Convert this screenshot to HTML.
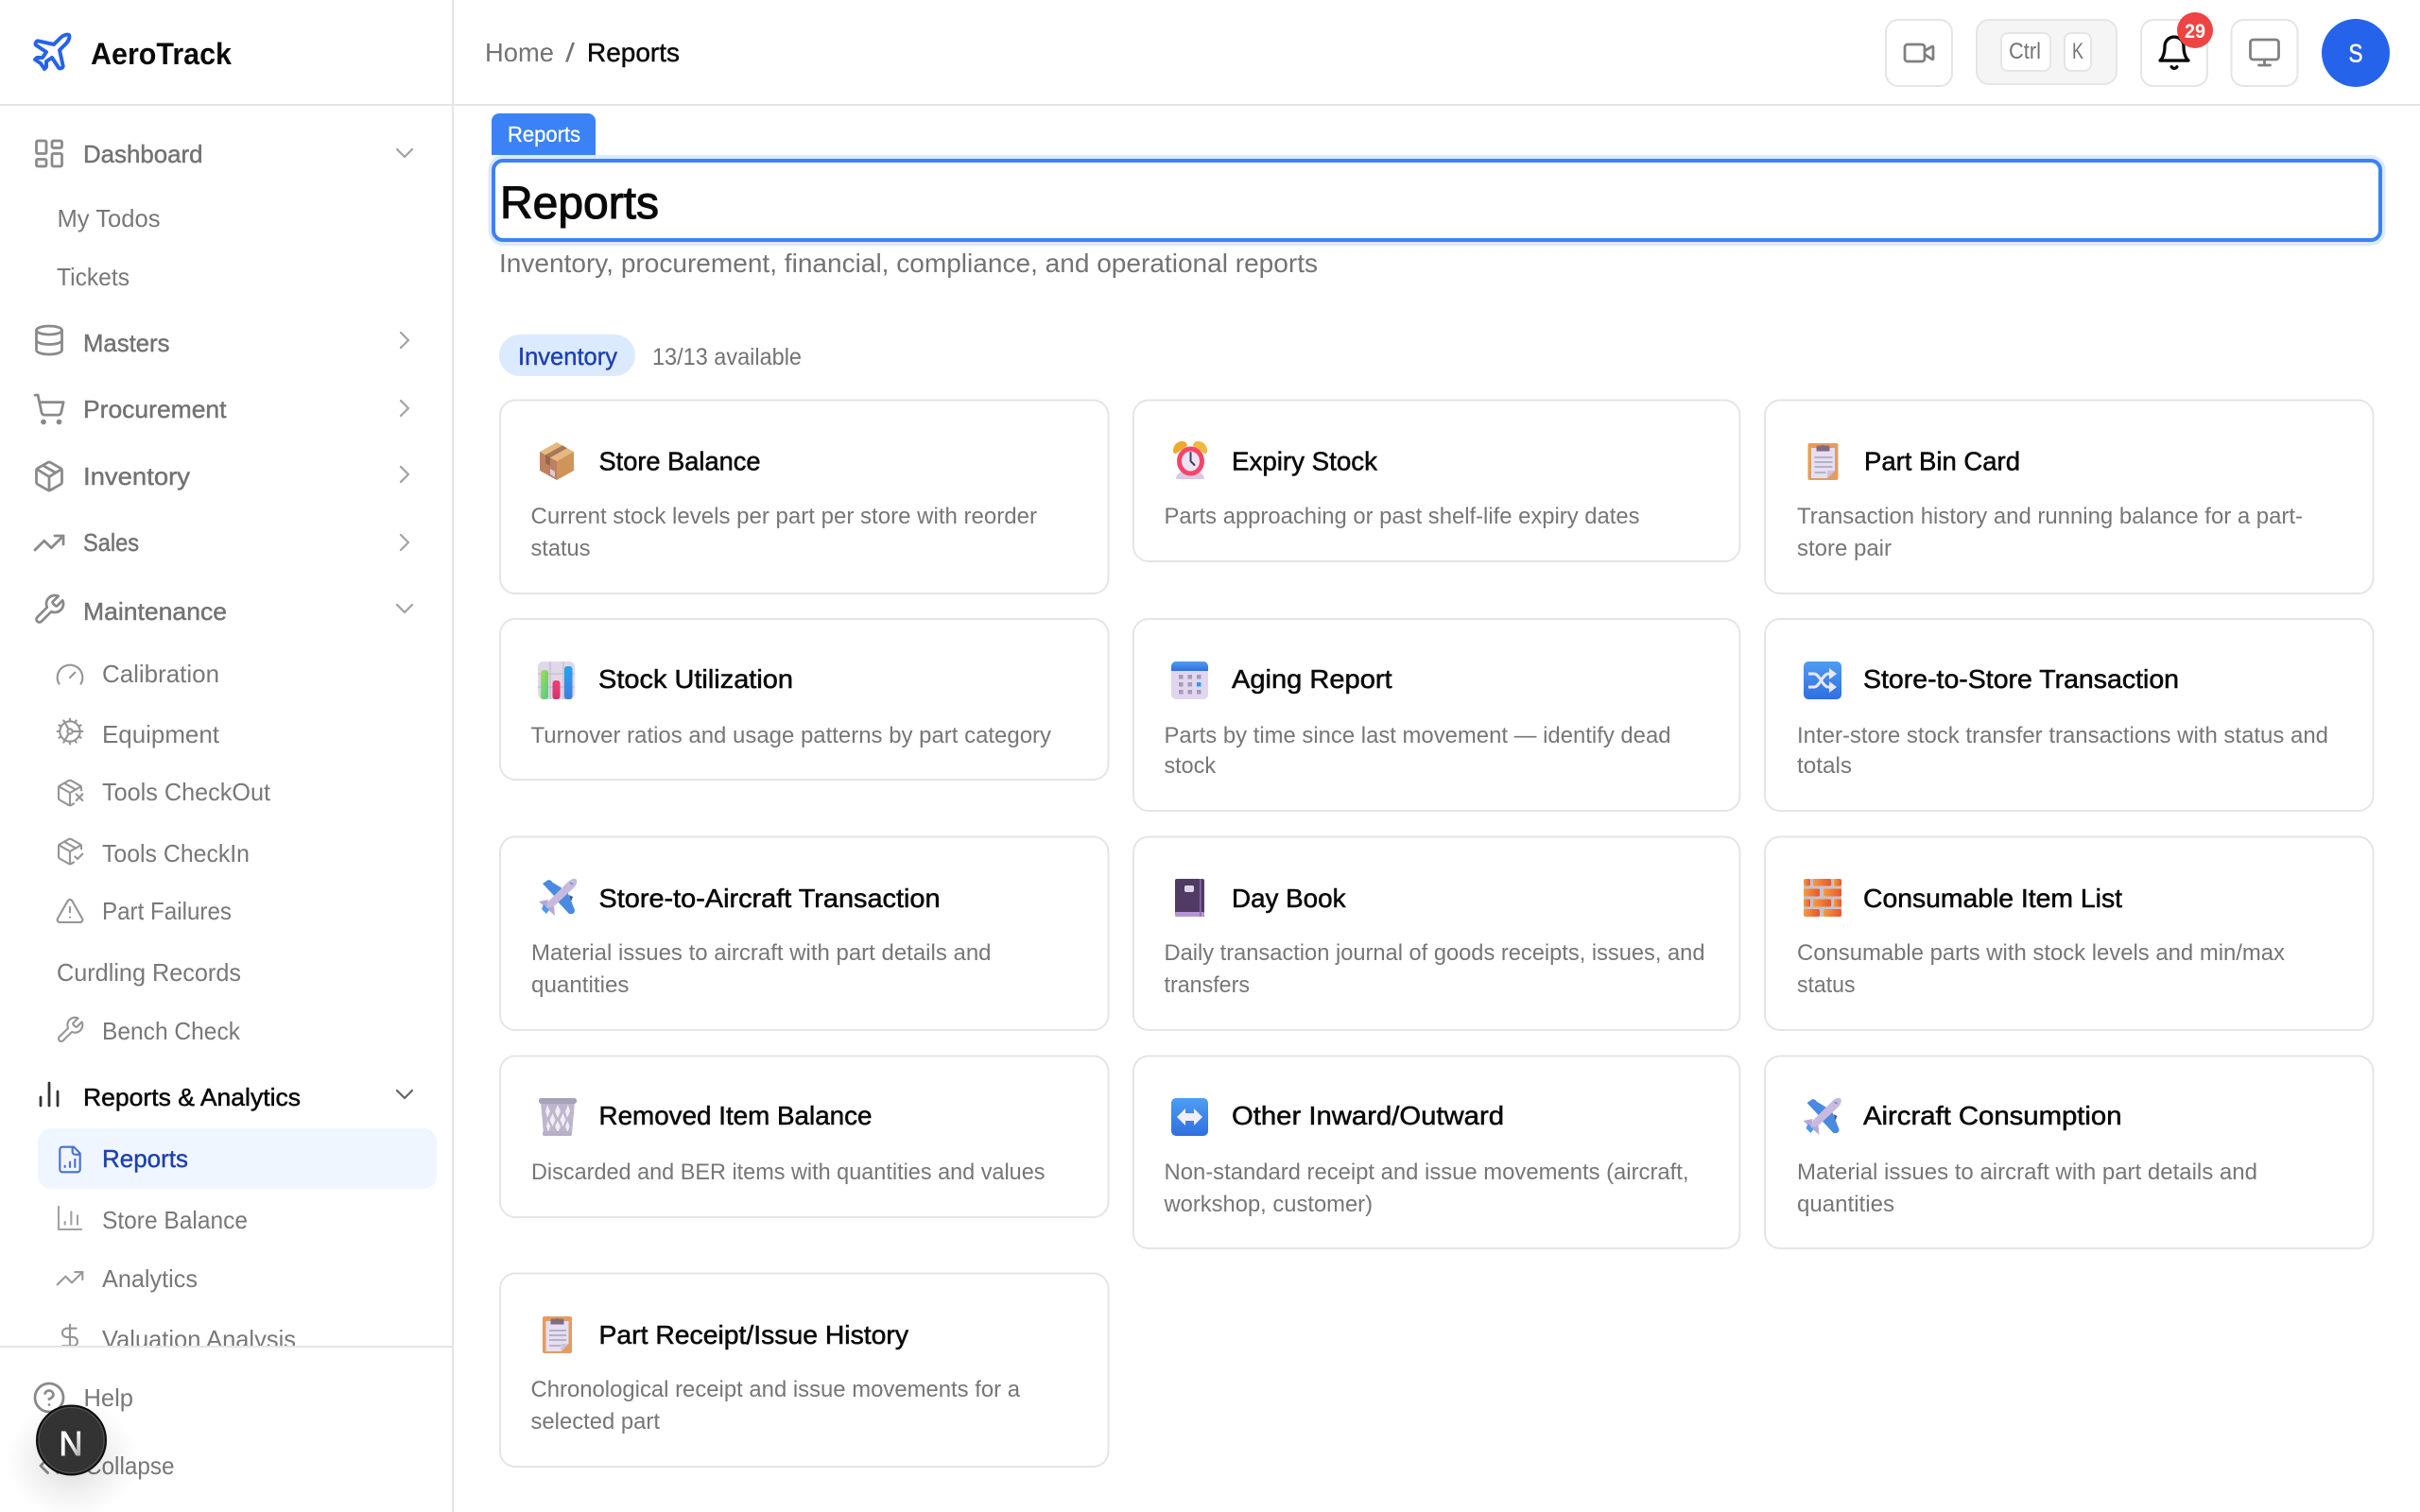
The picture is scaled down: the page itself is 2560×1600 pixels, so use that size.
<!DOCTYPE html>
<html lang="en">
<head>
<meta charset="utf-8">
<title>AeroTrack - Reports</title>
<style>
html,body{margin:0;padding:0;background:#fff;width:2560px;height:1600px;overflow:hidden}
svg{display:block}
text{font-family:"Liberation Sans",sans-serif;white-space:pre}
.nav{font-size:26px;fill:#737373;stroke:#737373;stroke-width:.45}
.sub{font-size:26px;fill:#787878}
.ttl{font-size:28px;fill:#0a0a0a;stroke:#0a0a0a;stroke-width:.55}
.dsc{font-size:24px;fill:#767676}
.ic{fill:none;stroke:#8a8a8a;stroke-linecap:round;stroke-linejoin:round;stroke-width:1.85}
.is{fill:none;stroke:#969696;stroke-linecap:round;stroke-linejoin:round;stroke-width:1.6}
.ch{fill:none;stroke:#a3a3a3;stroke-linecap:round;stroke-linejoin:round;stroke-width:1.7}
.card{fill:#fff;stroke:#e5e5e5;stroke-width:2}
</style>
</head>
<body>
<svg width="2560" height="1600" viewBox="0 0 2560 1600" xmlns="http://www.w3.org/2000/svg">
<defs>
<clipPath id="navclip"><rect x="0" y="112" width="478" height="1312"/></clipPath>
<linearGradient id="blue" x1="0" y1="0" x2="0" y2="1"><stop offset="0" stop-color="#4f9df2"/><stop offset="1" stop-color="#2f6fe0"/></linearGradient>
<linearGradient id="brick" x1="0" y1="0" x2="1" y2="0"><stop offset="0" stop-color="#f79a3e"/><stop offset="1" stop-color="#e9552c"/></linearGradient>
<linearGradient id="g1" x1="0" y1="0" x2="1" y2="1"><stop offset="0" stop-color="#a6e04c"/><stop offset="1" stop-color="#4cc98a"/></linearGradient>
<linearGradient id="g2" x1="0" y1="0" x2="0" y2="1"><stop offset="0" stop-color="#f0407a"/><stop offset="1" stop-color="#d8306c"/></linearGradient>
<linearGradient id="g3" x1="0" y1="0" x2="0" y2="1"><stop offset="0" stop-color="#29a0f0"/><stop offset="1" stop-color="#3f7fe0"/></linearGradient>
<linearGradient id="nfade" x1="0" y1="0" x2="1" y2="1"><stop offset=".45" stop-color="#fff"/><stop offset="1" stop-color="#8a8a8a"/></linearGradient>
<radialGradient id="shadow"><stop offset="0" stop-color="#000" stop-opacity=".14"/><stop offset=".6" stop-color="#000" stop-opacity=".05"/><stop offset="1" stop-color="#000" stop-opacity="0"/></radialGradient>
</defs>

<rect width="2560" height="1600" fill="#fff"/>

<!-- Sidebar frame -->
<rect x="478" y="0" width="2" height="1600" fill="#e5e5e5"/>
<rect x="0" y="110" width="2560" height="2" fill="#e5e5e5"/>

<!-- Logo -->
<g transform="translate(31,31) scale(2)" fill="none" stroke="#2563eb" stroke-width="2" stroke-linecap="round" stroke-linejoin="round"><path d="M17.8 19.2 16 11l3.5-3.5C21 6 21.5 4 21 3c-1-.5-3 0-4.5 1.5L13 8 4.8 6.2c-.5-.1-.9.1-1.1.5l-.3.5c-.2.5-.1 1 .3 1.3L9 12l-2 3H4l-1 1 3 2 2 3 1-1v-3l3-2 3.5 5.3c.3.4.8.5 1.3.3l.5-.2c.4-.3.6-.7.5-1.2z"/></g>
<text x="96" y="68" font-size="32" font-weight="700" fill="#0a0a0a" textLength="149" lengthAdjust="spacingAndGlyphs">AeroTrack</text>

<!-- Nav -->
<g clip-path="url(#navclip)">
<g transform="translate(34,144.5) scale(1.5)" class="ic"><rect width="7" height="9" x="3" y="3" rx="1"/><rect width="7" height="5" x="14" y="3" rx="1"/><rect width="7" height="9" x="14" y="12" rx="1"/><rect width="7" height="5" x="3" y="16" rx="1"/></g>
<text class="nav" x="88" y="172" textLength="126.500" lengthAdjust="spacingAndGlyphs">Dashboard</text>
<g transform="translate(412,146) scale(1.333)" class="ch"><path d="m6 9 6 6 6-6"/></g>

<text class="sub" x="60.500" y="240" textLength="109" lengthAdjust="spacingAndGlyphs">My Todos</text>
<text class="sub" x="60" y="302" textLength="77" lengthAdjust="spacingAndGlyphs">Tickets</text>

<g transform="translate(34,342) scale(1.5)" class="ic"><ellipse cx="12" cy="5" rx="9" ry="3"/><path d="M3 5V19A9 3 0 0 0 21 19V5"/><path d="M3 12A9 3 0 0 0 21 12"/></g>
<text class="nav" x="88" y="372" textLength="91.500" lengthAdjust="spacingAndGlyphs">Masters</text>
<g transform="translate(412,344) scale(1.333)" class="ch"><path d="m9 18 6-6-6-6"/></g>

<g transform="translate(34,415) scale(1.5)" class="ic"><circle cx="8" cy="21" r="1"/><circle cx="19" cy="21" r="1"/><path d="M2.05 2.05h2l2.66 12.42a2 2 0 0 0 2 1.58h9.78a2 2 0 0 0 1.95-1.57l1.65-7.43H5.12"/></g>
<text class="nav" x="88" y="442" textLength="151.500" lengthAdjust="spacingAndGlyphs">Procurement</text>
<g transform="translate(412,416) scale(1.333)" class="ch"><path d="m9 18 6-6-6-6"/></g>

<g transform="translate(34,486) scale(1.5)" class="ic"><path d="M11 21.73a2 2 0 0 0 2 0l7-4A2 2 0 0 0 21 16V8a2 2 0 0 0-1-1.73l-7-4a2 2 0 0 0-2 0l-7 4A2 2 0 0 0 3 8v8a2 2 0 0 0 1 1.73z"/><path d="M12 22V12"/><path d="m3.3 7 7.703 4.734a2 2 0 0 0 1.994 0L20.7 7"/><path d="m7.5 4.27 9 5.15"/></g>
<text class="nav" x="88" y="513" textLength="113" lengthAdjust="spacingAndGlyphs">Inventory</text>
<g transform="translate(412,486) scale(1.333)" class="ch"><path d="m9 18 6-6-6-6"/></g>

<g transform="translate(34,556.5) scale(1.5)" class="ic"><path d="M16 7h6v6"/><path d="m22 7-8.5 8.5-5-5L2 17"/></g>
<text class="nav" x="88" y="583" textLength="59" lengthAdjust="spacingAndGlyphs">Sales</text>
<g transform="translate(412,558) scale(1.333)" class="ch"><path d="m9 18 6-6-6-6"/></g>

<g transform="translate(34,627) scale(1.5)" class="ic"><path d="M14.7 6.3a1 1 0 0 0 0 1.4l1.6 1.6a1 1 0 0 0 1.4 0l3.77-3.77a6 6 0 0 1-7.94 7.94l-6.91 6.91a2.12 2.12 0 0 1-3-3l6.91-6.91a6 6 0 0 1 7.94-7.94l-3.76 3.76z"/></g>
<text class="nav" x="88" y="656" textLength="152" lengthAdjust="spacingAndGlyphs">Maintenance</text>
<g transform="translate(412,628) scale(1.333)" class="ch"><path d="m6 9 6 6 6-6"/></g>

<g transform="translate(58,698.3) scale(1.333)" class="is"><path d="m12 14 4-4"/><path d="M3.34 19a10 10 0 1 1 17.32 0"/></g>
<text class="sub" x="108" y="722" textLength="124" lengthAdjust="spacingAndGlyphs">Calibration</text>

<g transform="translate(58,758) scale(1.333)" class="is"><path d="M12 20a8 8 0 1 0 0-16 8 8 0 0 0 0 16Z"/><path d="M12 14a2 2 0 1 0 0-4 2 2 0 0 0 0 4Z"/><path d="M12 2v2"/><path d="M12 22v-2"/><path d="m17 20.66-1-1.73"/><path d="M11 10.27 7 3.34"/><path d="m20.66 17-1.73-1"/><path d="m3.34 7 1.73 1"/><path d="M14 12h8"/><path d="M2 12h2"/><path d="m20.66 7-1.73 1"/><path d="m3.34 17 1.73-1"/><path d="m17 3.34-1 1.73"/><path d="m11 13.73-4 6.93"/></g>
<text class="sub" x="108" y="786" textLength="124" lengthAdjust="spacingAndGlyphs">Equipment</text>

<g transform="translate(58,823) scale(1.333)" class="is"><path d="M21 10V8a2 2 0 0 0-1-1.73l-7-4a2 2 0 0 0-2 0l-7 4A2 2 0 0 0 3 8v8a2 2 0 0 0 1 1.73l7 4a2 2 0 0 0 2 0l2-1.14"/><path d="m7.5 4.27 9 5.15"/><polyline points="3.29 7 12 12 20.71 7"/><line x1="12" x2="12" y1="22" y2="12"/><path d="m17 13 5 5m-5 0 5-5"/></g>
<text class="sub" x="108" y="847" textLength="178" lengthAdjust="spacingAndGlyphs">Tools CheckOut</text>

<g transform="translate(58,885) scale(1.333)" class="is"><path d="m16 16 2 2 4-4"/><path d="M21 10V8a2 2 0 0 0-1-1.73l-7-4a2 2 0 0 0-2 0l-7 4A2 2 0 0 0 3 8v8a2 2 0 0 0 1 1.73l7 4a2 2 0 0 0 2 0l2-1.14"/><path d="m7.5 4.27 9 5.15"/><polyline points="3.29 7 12 12 20.71 7"/><line x1="12" x2="12" y1="22" y2="12"/></g>
<text class="sub" x="108" y="912" textLength="156" lengthAdjust="spacingAndGlyphs">Tools CheckIn</text>

<g transform="translate(58,948) scale(1.333)" class="is"><path d="m21.73 18-8-14a2 2 0 0 0-3.48 0l-8 14A2 2 0 0 0 4 21h16a2 2 0 0 0 1.73-3"/><path d="M12 9v4"/><path d="M12 17h.01"/></g>
<text class="sub" x="108" y="973" textLength="137" lengthAdjust="spacingAndGlyphs">Part Failures</text>

<text class="sub" x="60" y="1038" textLength="195" lengthAdjust="spacingAndGlyphs">Curdling Records</text>

<g transform="translate(58,1074) scale(1.333)" class="is"><path d="M14.7 6.3a1 1 0 0 0 0 1.4l1.6 1.6a1 1 0 0 0 1.4 0l3.77-3.77a6 6 0 0 1-7.94 7.94l-6.91 6.91a2.12 2.12 0 0 1-3-3l6.91-6.91a6 6 0 0 1 7.94-7.94l-3.76 3.76z"/></g>
<text class="sub" x="108" y="1100" textLength="146" lengthAdjust="spacingAndGlyphs">Bench Check</text>

<g transform="translate(34,1140) scale(1.5)" class="ic" style="stroke:#333"><line x1="18" x2="18" y1="20" y2="10"/><line x1="12" x2="12" y1="20" y2="4"/><line x1="6" x2="6" y1="20" y2="14"/></g>
<text x="88" y="1170" font-size="26" fill="#0a0a0a" stroke="#0a0a0a" stroke-width=".5" textLength="230" lengthAdjust="spacingAndGlyphs">Reports &amp; Analytics</text>
<g transform="translate(412,1142) scale(1.333)" class="ch" style="stroke:#666"><path d="m6 9 6 6 6-6"/></g>

<rect x="40" y="1194" width="422" height="64" rx="14" fill="#eff6ff"/>
<g transform="translate(58,1211) scale(1.333)" class="is" style="stroke:#4a70d2"><path d="M15 2H6a2 2 0 0 0-2 2v16a2 2 0 0 0 2 2h12a2 2 0 0 0 2-2V7Z"/><path d="M14 2v4a2 2 0 0 0 2 2h4"/><path d="M8 18v-1"/><path d="M12 18v-4"/><path d="M16 18v-6"/></g>
<text x="108" y="1235" font-size="26" fill="#1e40af" stroke="#1e40af" stroke-width=".4" textLength="91" lengthAdjust="spacingAndGlyphs">Reports</text>

<g transform="translate(58,1273) scale(1.333)" class="is" style="stroke:#a3a3a3"><path d="M3 3v18h18"/><path d="M8 17v-2"/><path d="M13 17V7"/><path d="M18 17v-7"/></g>
<text class="sub" x="108" y="1300" textLength="154" lengthAdjust="spacingAndGlyphs">Store Balance</text>

<g transform="translate(58,1336.7) scale(1.333)" class="is" style="stroke:#999"><path d="M16 7h6v6"/><path d="m22 7-8.5 8.5-5-5L2 17"/></g>
<text class="sub" x="108" y="1362" textLength="101" lengthAdjust="spacingAndGlyphs">Analytics</text>

<g transform="translate(58,1399) scale(1.333)" class="is"><line x1="12" x2="12" y1="2" y2="22"/><path d="M17 5H9.5a3.5 3.5 0 0 0 0 7h5a3.5 3.5 0 0 1 0 7H6"/></g>
<text class="sub" x="108" y="1426" textLength="205" lengthAdjust="spacingAndGlyphs">Valuation Analysis</text>
</g>

<rect x="0" y="1424" width="478" height="2" fill="#e5e5e5"/>

<!-- Sidebar footer -->
<g transform="translate(34,1461) scale(1.5)" class="ic"><circle cx="12" cy="12" r="10"/><path d="M9.09 9a3 3 0 0 1 5.83 1c0 2-3 3-3 3"/><path d="M12 17h.01"/></g>
<text class="sub" x="88.500" y="1488" textLength="52.500" lengthAdjust="spacingAndGlyphs">Help</text>
<g transform="translate(34,1533) scale(1.5)" class="ic"><path d="m11 17-5-5 5-5"/><path d="m18 17-5-5 5-5"/></g>
<text class="sub" x="90" y="1560" textLength="94.500" lengthAdjust="spacingAndGlyphs">Collapse</text>

<!-- Next badge -->
<ellipse cx="76" cy="1545" rx="70" ry="62" fill="url(#shadow)"/>
<circle cx="75.5" cy="1524" r="36.5" fill="#333" stroke="#0d0d0d" stroke-width="2"/>
<circle cx="75.5" cy="1524" r="34.5" fill="none" stroke="#555" stroke-width="1"/>
<text x="62.500" y="1540" font-size="36" fill="url(#nfade)" stroke="url(#nfade)" stroke-width=".9" textLength="25" lengthAdjust="spacingAndGlyphs">N</text>

<!-- Breadcrumb -->
<text x="513" y="65" font-size="28" fill="#737373" textLength="73" lengthAdjust="spacingAndGlyphs">Home</text>
<text x="598" y="65" font-size="28" fill="#737373" textLength="10" lengthAdjust="spacingAndGlyphs">/</text>
<text x="621" y="65" font-size="28" fill="#0a0a0a" stroke="#0a0a0a" stroke-width=".45" textLength="98" lengthAdjust="spacingAndGlyphs">Reports</text>

<!-- Header buttons -->
<rect x="1995" y="21" width="70" height="70" rx="13" fill="#fff" stroke="#e5e5e5" stroke-width="2"/>
<g transform="translate(2012,38) scale(1.5)" class="ic" style="stroke:#808080"><path d="m16 13 5.223 3.482a.5.5 0 0 0 .777-.416V7.87a.5.5 0 0 0-.752-.432L16 10.5"/><rect x="2" y="6" width="14" height="12" rx="2"/></g>

<rect x="2091" y="21" width="148" height="68" rx="13" fill="#f5f5f5" stroke="#e5e5e5" stroke-width="2"/>
<rect x="2117" y="35" width="52" height="40" rx="7" fill="#fff" stroke="#e5e5e5" stroke-width="2"/>
<text x="2125" y="62" font-size="24" fill="#737373" textLength="34" lengthAdjust="spacingAndGlyphs">Ctrl</text>
<rect x="2184" y="35" width="28" height="40" rx="7" fill="#fff" stroke="#e5e5e5" stroke-width="2"/>
<text x="2192" y="62" font-size="24" fill="#737373" textLength="12" lengthAdjust="spacingAndGlyphs">K</text>

<rect x="2265" y="21" width="70" height="70" rx="13" fill="#fff" stroke="#e5e5e5" stroke-width="2"/>
<g transform="translate(2280,35.7) scale(1.667)" fill="none" stroke="#0a0a0a" stroke-width="2" stroke-linecap="round" stroke-linejoin="round"><path d="M6 8a6 6 0 0 1 12 0c0 7 3 9 3 9H3s3-2 3-9"/><path d="M10.3 21a1.94 1.94 0 0 0 3.4 0"/></g>
<circle cx="2322" cy="32" r="19" fill="#ef4444"/>
<text x="2311" y="40" font-size="21" font-weight="700" fill="#fff" textLength="22" lengthAdjust="spacingAndGlyphs">29</text>

<rect x="2360.5" y="21" width="70" height="70" rx="13" fill="#fff" stroke="#e5e5e5" stroke-width="2"/>
<g transform="translate(2377.5,37.5) scale(1.5)" class="ic" style="stroke:#808080"><rect width="20" height="14" x="2" y="3" rx="2"/><line x1="8" x2="16" y1="21" y2="21"/><line x1="12" x2="12" y1="17" y2="21"/></g>

<circle cx="2492" cy="56" r="36" fill="#2563eb"/>
<text x="2484.500" y="65.500" font-size="27" fill="#fff" stroke="#fff" stroke-width=".6" textLength="15" lengthAdjust="spacingAndGlyphs">S</text>

<!-- Page title -->
<path d="M520 164V128a8 8 0 0 1 8-8h94a8 8 0 0 1 8 8v36z" fill="#3b82f6"/>
<text x="537" y="150" font-size="23" fill="#fff" stroke="#fff" stroke-width=".3" textLength="77" lengthAdjust="spacingAndGlyphs">Reports</text>
<rect x="518.5" y="166" width="2003" height="92" rx="14" fill="none" stroke="#dbeafe" stroke-width="4"/>
<rect x="522" y="170" width="1996" height="84" rx="10" fill="#fff" stroke="#3b82f6" stroke-width="4"/>
<text x="529" y="231" font-size="48" fill="#0a0a0a" stroke="#0a0a0a" stroke-width="1.1" textLength="168" lengthAdjust="spacingAndGlyphs">Reports</text>
<text x="528" y="288" font-size="28" fill="#737373" textLength="866" lengthAdjust="spacingAndGlyphs">Inventory, procurement, financial, compliance, and operational reports</text>

<!-- Category -->
<rect x="528" y="354" width="144" height="44" rx="22" fill="#dbeafe"/>
<text x="548" y="386" font-size="26" fill="#1e40af" stroke="#1e40af" stroke-width=".4" textLength="105" lengthAdjust="spacingAndGlyphs">Inventory</text>
<text x="690" y="386" font-size="25" fill="#737373" textLength="158" lengthAdjust="spacingAndGlyphs">13/13 available</text>

<!-- Cards -->
<rect class="card" x="529" y="423.500" width="643.500" height="204.500" rx="16"/>
<rect class="card" x="1199" y="423.500" width="641.500" height="170.500" rx="16"/>
<rect class="card" x="1867" y="423.500" width="643.500" height="204.500" rx="16"/>
<rect class="card" x="529" y="655" width="643.500" height="170" rx="16"/>
<rect class="card" x="1199" y="655" width="641.500" height="203" rx="16"/>
<rect class="card" x="1867" y="655" width="643.500" height="203" rx="16"/>
<rect class="card" x="529" y="885.5" width="643.500" height="204.500" rx="16"/>
<rect class="card" x="1199" y="885.5" width="641.500" height="204.500" rx="16"/>
<rect class="card" x="1867" y="885.5" width="643.500" height="204.500" rx="16"/>
<rect class="card" x="529" y="1117.500" width="643.500" height="170.500" rx="16"/>
<rect class="card" x="1199" y="1117.500" width="641.500" height="203.500" rx="16"/>
<rect class="card" x="1867" y="1117.500" width="643.500" height="203.500" rx="16"/>
<rect class="card" x="529" y="1347.500" width="643.500" height="204.500" rx="16"/>

<!-- Card text -->
<text class="ttl" x="633.5" y="497.500" textLength="171" lengthAdjust="spacingAndGlyphs">Store Balance</text>
<text class="dsc" x="561.5" y="554" textLength="535.5" lengthAdjust="spacingAndGlyphs">Current stock levels per part per store with reorder</text>
<text class="dsc" x="561.5" y="588" textLength="63" lengthAdjust="spacingAndGlyphs">status</text>

<text class="ttl" x="1303" y="497.500" textLength="154" lengthAdjust="spacingAndGlyphs">Expiry Stock</text>
<text class="dsc" x="1231.5" y="554" textLength="503" lengthAdjust="spacingAndGlyphs">Parts approaching or past shelf-life expiry dates</text>

<text class="ttl" x="1972" y="497.500" textLength="165" lengthAdjust="spacingAndGlyphs">Part Bin Card</text>
<text class="dsc" x="1901" y="554" textLength="535" lengthAdjust="spacingAndGlyphs">Transaction history and running balance for a part-</text>
<text class="dsc" x="1901" y="588" textLength="100" lengthAdjust="spacingAndGlyphs">store pair</text>

<text class="ttl" x="633" y="728" textLength="206" lengthAdjust="spacingAndGlyphs">Stock Utilization</text>
<text class="dsc" x="561.5" y="786" textLength="550.5" lengthAdjust="spacingAndGlyphs">Turnover ratios and usage patterns by part category</text>

<text class="ttl" x="1303" y="728" textLength="169.6" lengthAdjust="spacingAndGlyphs">Aging Report</text>
<text class="dsc" x="1231.5" y="786" textLength="536" lengthAdjust="spacingAndGlyphs">Parts by time since last movement — identify dead</text>
<text class="dsc" x="1231.5" y="818" textLength="54.5" lengthAdjust="spacingAndGlyphs">stock</text>

<text class="ttl" x="1971" y="728" textLength="334" lengthAdjust="spacingAndGlyphs">Store-to-Store Transaction</text>
<text class="dsc" x="1901" y="786" textLength="562" lengthAdjust="spacingAndGlyphs">Inter-store stock transfer transactions with status and</text>
<text class="dsc" x="1901" y="818" textLength="58" lengthAdjust="spacingAndGlyphs">totals</text>

<text class="ttl" x="633.5" y="960" textLength="361" lengthAdjust="spacingAndGlyphs">Store-to-Aircraft Transaction</text>
<text class="dsc" x="562" y="1016" textLength="486.5" lengthAdjust="spacingAndGlyphs">Material issues to aircraft with part details and</text>
<text class="dsc" x="562" y="1050" textLength="103.5" lengthAdjust="spacingAndGlyphs">quantities</text>

<text class="ttl" x="1303" y="960" textLength="120.5" lengthAdjust="spacingAndGlyphs">Day Book</text>
<text class="dsc" x="1231.5" y="1016" textLength="572" lengthAdjust="spacingAndGlyphs">Daily transaction journal of goods receipts, issues, and</text>
<text class="dsc" x="1231.5" y="1050" textLength="90.5" lengthAdjust="spacingAndGlyphs">transfers</text>

<text class="ttl" x="1971" y="960" textLength="274" lengthAdjust="spacingAndGlyphs">Consumable Item List</text>
<text class="dsc" x="1901" y="1016" textLength="516" lengthAdjust="spacingAndGlyphs">Consumable parts with stock levels and min/max</text>
<text class="dsc" x="1901" y="1050" textLength="61.500" lengthAdjust="spacingAndGlyphs">status</text>

<text class="ttl" x="633.5" y="1190" textLength="289" lengthAdjust="spacingAndGlyphs">Removed Item Balance</text>
<text class="dsc" x="562" y="1248" textLength="543.5" lengthAdjust="spacingAndGlyphs">Discarded and BER items with quantities and values</text>

<text class="ttl" x="1303" y="1190" textLength="288" lengthAdjust="spacingAndGlyphs">Other Inward/Outward</text>
<text class="dsc" x="1231.5" y="1248" textLength="555" lengthAdjust="spacingAndGlyphs">Non-standard receipt and issue movements (aircraft,</text>
<text class="dsc" x="1231.5" y="1282" textLength="220.5" lengthAdjust="spacingAndGlyphs">workshop, customer)</text>

<text class="ttl" x="1971" y="1190" textLength="273.500" lengthAdjust="spacingAndGlyphs">Aircraft Consumption</text>
<text class="dsc" x="1901" y="1248" textLength="487" lengthAdjust="spacingAndGlyphs">Material issues to aircraft with part details and</text>
<text class="dsc" x="1901" y="1282" textLength="103" lengthAdjust="spacingAndGlyphs">quantities</text>

<text class="ttl" x="633.5" y="1422" textLength="327.500" lengthAdjust="spacingAndGlyphs">Part Receipt/Issue History</text>
<text class="dsc" x="561.5" y="1478" textLength="517.5" lengthAdjust="spacingAndGlyphs">Chronological receipt and issue movements for a</text>
<text class="dsc" x="561.5" y="1512" textLength="136.5" lengthAdjust="spacingAndGlyphs">selected part</text>

<!-- Emoji: package -->
<g transform="translate(571,468)">
<polygon points="18,0 36,10 18,20 0,10" fill="#e6ba7e"/>
<polygon points="0,10 18,20 18,40 0,30" fill="#bd8160"/>
<polygon points="36,10 18,20 18,40 36,30" fill="#cf9558"/>
<polygon points="24,3.4 29,6.2 11,16.2 6,13.4" fill="#a8775a"/>
<polygon points="6,13.4 11,16.2 11,25 6,22" fill="#96664e"/>
<polygon points="11,28 16,31 16,37 11,34" fill="#dccbdc"/>
</g>

<!-- Emoji: alarm clock -->
<g transform="translate(1241,467)">
<path d="M0 10C0 4 5-1 11 0c3 1 4 3 4 5L3 13C1 13 0 12 0 10z" fill="#f0a92f"/>
<path d="M36 10C36 4 31-1 25 0c-3 1-4 3-4 5l12 8c2 0 3-1 3-3z" fill="#f0b93f"/>
<path d="M3 40c0-5 4-9 15-9s15 4 15 9z" fill="#dcc8ec"/>
<ellipse cx="18.500" cy="21" rx="12" ry="13" fill="#ece4f2" stroke="#f5456a" stroke-width="5"/>
<path d="M18.500 12v9l4 4" fill="none" stroke="#4a3a60" stroke-width="2" stroke-linecap="round"/>
</g>

<!-- Emoji: clipboard -->
<g transform="translate(1912.5,468)">
<rect x="0" y="1" width="32" height="39" rx="2" fill="#e59c60"/>
<path d="M3.500 6h25v24l-8 8h-17z" fill="#e6def2"/>
<path d="M28.500 30l-8 8v-8z" fill="#cfc4dc"/>
<path d="M9 5.500a2 2 0 0 1 2-2h3.500a2 2 0 0 1 3 0H21a2 2 0 0 1 2 2v4H9z" fill="#7e6c80"/>
<path d="M7 16h19M7 21h19M7 26h19M7 32h12" stroke="#a8a0b6" stroke-width="1.600"/>
</g>

<!-- Emoji: bar chart -->
<g transform="translate(569,700)">
<rect width="39" height="40" rx="6" fill="#ded8e8"/>
<path d="M13 0v40M27 0v40M0 13h39M0 27h39" stroke="#c8c0d0" stroke-width="1.500"/>
<rect x="3" y="9" width="8" height="31" rx="3" fill="url(#g1)"/>
<rect x="15.500" y="20" width="8" height="20" rx="3" fill="url(#g2)"/>
<rect x="28" y="5" width="8.500" height="35" rx="3" fill="url(#g3)"/>
</g>

<!-- Emoji: calendar -->
<g transform="translate(1239,700)">
<rect width="39" height="40" rx="5" fill="#e1d6ef"/>
<path d="M0 10V5a5 5 0 0 1 5-5h29a5 5 0 0 1 5 5v5z" fill="url(#blue)"/>
<g fill="#a49bb2"><rect x="8" y="14" width="4.500" height="4.500"/><rect x="17.500" y="14" width="4.500" height="4.500"/><rect x="27" y="14" width="4.500" height="4.500"/><rect x="8" y="22" width="4.500" height="4.500"/><rect x="17.500" y="22" width="4.500" height="4.500"/><rect x="8" y="30" width="4.500" height="4.500"/><rect x="17.500" y="30" width="4.500" height="4.500"/><rect x="27" y="30" width="4.500" height="4.500"/></g>
<rect x="27" y="22" width="4.500" height="4.500" fill="#2a9bf0"/>
</g>

<!-- Emoji: shuffle -->
<g transform="translate(1908,700)">
<rect width="40" height="40" rx="5" fill="url(#blue)"/>
<path d="M5 13h6c6 0 9 14 15 14h3M5 27h6c6 0 9-14 15-14h3" fill="none" stroke="#ece6f8" stroke-width="3"/>
<path d="M27 7l8 6-8 6zM27 21l8 6-8 6z" fill="#ece6f8"/>
</g>

<!-- Emoji: airplane -->
<g transform="translate(570,930)">
<path d="M11 1l3 2-2 3zM32 17l4 2-2 5z" fill="#3e5a80"/>
<path d="M4 5L10 1 28 12 19 21z" fill="#4a8ae0"/>
<path d="M19 23L30 13 38 33c0 2-1 4-3 4h-3z" fill="#4a8ae0"/>
<path d="M39.500 0.500c1.500 1.500 1 5-2 8.500L14 31 7 33 9 25 31 3c3-3 7-4 8.500-2.500z" fill="#c8bade"/>
<path d="M0 24L10 22 8 31zM8 31l8-2 1 10z" fill="#b8a8d4"/>
<path d="M5 27l6 6-3 4-5-5z" fill="#4a9af0"/>
<path d="M33 4l3 2" stroke="#3aa0e8" stroke-width="1.500"/>
</g>

<!-- Emoji: notebook -->
<g transform="translate(1243,930)">
<path d="M2 0h27a2 2 0 0 1 2 2v38H3a3 3 0 0 1-3-3V2a2 2 0 0 1 2-2z" fill="#503b64"/>
<rect x="0" y="35" width="31" height="5" rx="1.500" fill="#b596d4"/>
<rect x="10" y="7" width="10" height="7" rx="2" fill="#dcd4e8"/>
<rect x="26" y="0" width="1.500" height="40" fill="#8a6cb0"/>
</g>

<!-- Emoji: bricks -->
<g transform="translate(1908,930)">
<rect width="40" height="40" rx="5" fill="#c9c0c8"/>
<g fill="url(#brick)">
<rect x="0" y="0" width="7" height="7.500" rx="2"/><rect x="10" y="0" width="19" height="7.500" rx="1.500"/><rect x="32" y="0" width="8" height="7.500" rx="2"/>
<rect x="0" y="10.500" width="17" height="8" rx="1.500"/><rect x="21" y="10.500" width="19" height="8" rx="1.500"/>
<rect x="0" y="21.500" width="7" height="8" rx="1"/><rect x="10" y="21.500" width="19" height="8" rx="1.500"/><rect x="32" y="21.500" width="8" height="8" rx="1"/>
<rect x="0" y="32" width="17" height="8" rx="2"/><rect x="21" y="32" width="19" height="8" rx="2"/>
</g>
</g>

<!-- Emoji: wastebasket -->
<g transform="translate(570,1162)">
<path d="M2 4h36l-3 34H5z" fill="#bdb6cc"/>
<g fill="#f0edf5">
<path d="M9 7l3 7-3 7-2-7zM20 7l3 7-3 7-3-7zM31 7l2 7-3 7-2-7zM14.500 16l3 7-3 7-3-7zM25.500 16l3 7-3 7-3-7zM9.500 24l2.500 6-2 6-2-6zM20 24l3 6-3 6-3-6zM30.500 24l2 6-2 6-2.500-6z"/>
</g>
<rect x="0" y="0" width="40" height="6" rx="2.500" fill="#a8a2b8"/>
<rect x="4" y="35" width="31" height="5" rx="2" fill="#b8b0c6"/>
</g>

<!-- Emoji: left-right arrow -->
<g transform="translate(1239,1162)">
<rect width="39" height="40" rx="5" fill="url(#blue)"/>
<path d="M6 20l9-9v5h9v-5l9 9-9 9v-5h-9v5z" fill="#f2eefa"/>
</g>

<!-- Emoji: airplane 2 -->
<g transform="translate(1907.5,1162)">
<path d="M11 1l3 2-2 3zM32 17l4 2-2 5z" fill="#3e5a80"/>
<path d="M4 5L10 1 28 12 19 21z" fill="#4a8ae0"/>
<path d="M19 23L30 13 38 33c0 2-1 4-3 4h-3z" fill="#4a8ae0"/>
<path d="M39.500 0.500c1.500 1.500 1 5-2 8.500L14 31 7 33 9 25 31 3c3-3 7-4 8.500-2.500z" fill="#c8bade"/>
<path d="M0 24L10 22 8 31zM8 31l8-2 1 10z" fill="#b8a8d4"/>
<path d="M5 27l6 6-3 4-5-5z" fill="#4a9af0"/>
<path d="M33 4l3 2" stroke="#3aa0e8" stroke-width="1.500"/>
</g>

<!-- Emoji: clipboard 2 -->
<g transform="translate(574,1392)">
<rect x="0" y="1" width="31" height="39" rx="2" fill="#e59c60"/>
<path d="M3.500 6h24v24l-8 8h-16z" fill="#e6def2"/>
<path d="M27.500 30l-8 8v-8z" fill="#cfc4dc"/>
<path d="M8.500 5.500a2 2 0 0 1 2-2h3.500a2 2 0 0 1 3 0H20.500a2 2 0 0 1 2 2v4h-14z" fill="#7e6c80"/>
<path d="M7 16h18M7 21h18M7 26h18M7 32h12" stroke="#a8a0b6" stroke-width="1.600"/>
</g>
</svg>
</body>
</html>
